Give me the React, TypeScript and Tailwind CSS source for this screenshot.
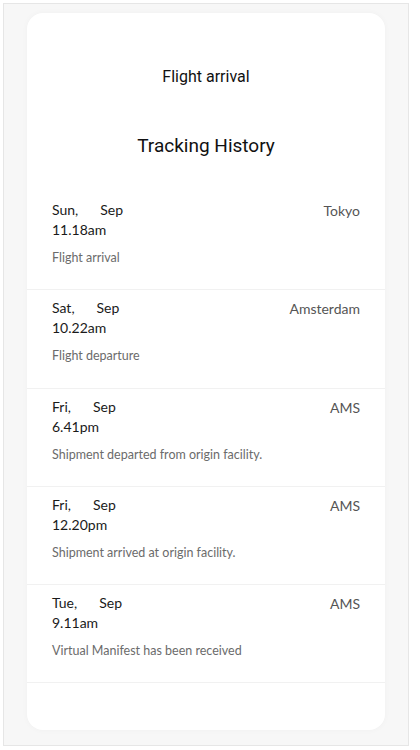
import React from 'react';

const rows = [
  { day: 'Sun,', month: 'Sep', time: '11.18am', place: 'Tokyo', note: 'Flight arrival' },
  { day: 'Sat,', month: 'Sep', time: '10.22am', place: 'Amsterdam', note: 'Flight departure' },
  { day: 'Fri,', month: 'Sep', time: '6.41pm', place: 'AMS', note: 'Shipment departed from origin facility.' },
  { day: 'Fri,', month: 'Sep', time: '12.20pm', place: 'AMS', note: 'Shipment arrived at origin facility.' },
  { day: 'Tue,', month: 'Sep', time: '9.11am', place: 'AMS', note: 'Virtual Manifest has been received' },
];

export default function App() {
  return (
    <div className="w-[420px] h-[750px] bg-white pt-[3px] pl-[3px]">
      <div className="w-[406px] h-[743px] border border-[#e6e6e6] bg-[#f7f7f7] pt-[9px] px-[23px]">
        <div className="bg-white rounded-2xl h-[717px] shadow-[0_0_6px_rgba(0,0,0,0.03)]">
          <div className="pt-[52px] text-center font-['Roboto',sans-serif] text-[#111]">
            <h2 className="text-[16px] leading-6">Flight arrival</h2>
            <h1 className="mt-[43px] text-[19px] leading-7">Tracking History</h1>
          </div>
          <div className="mt-[32px] font-['Lato',sans-serif]">
            {rows.map((r, i) => (
              <div key={i} className="border-b border-[#f1f1f1] pt-2 pb-[23.3px] px-[25px]">
                <div className="flex justify-between">
                  <div className="text-[14px] leading-5 text-[#1a1a1a]">
                    <div>
                      {r.day}
                      <span className="inline-block w-[22px]" />
                      {r.month}
                    </div>
                    <div>{r.time}</div>
                  </div>
                  <div className="text-[14px] leading-5 text-[#555] pt-[1px]">{r.place}</div>
                </div>
                <p className="mt-[10px] text-[12.5px] leading-4 text-[#6b6b6b]">{r.note}</p>
              </div>
            ))}
          </div>
        </div>
      </div>
    </div>
  );
}
